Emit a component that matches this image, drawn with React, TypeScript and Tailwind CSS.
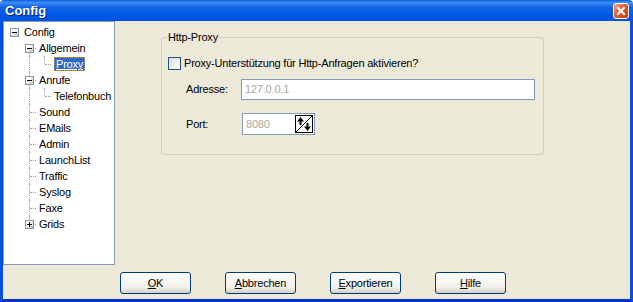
import type { ReactNode } from "react";

type Row = {
  label: string;
  level: number;
  expander?: "+" | "-";
  // columns that carry a vertical line: "pass" = full, "top" = top half only (L shape), "bottom" = from middle down
  cols: ("none" | "pass" | "top" | "bottom" | "tee")[];
  selected?: boolean;
};

const rows: Row[] = [
  { label: "Config", level: 0, expander: "-", cols: [] },
  { label: "Allgemein", level: 1, expander: "-", cols: ["none", "bottom"] },
  { label: "Proxy", level: 2, cols: ["none", "pass", "top"], selected: true },
  { label: "Anrufe", level: 1, expander: "-", cols: ["none", "tee"] },
  { label: "Telefonbuch", level: 2, cols: ["none", "pass", "top"] },
  { label: "Sound", level: 1, cols: ["none", "tee"] },
  { label: "EMails", level: 1, cols: ["none", "tee"] },
  { label: "Admin", level: 1, cols: ["none", "tee"] },
  { label: "LaunchList", level: 1, cols: ["none", "tee"] },
  { label: "Traffic", level: 1, cols: ["none", "tee"] },
  { label: "Syslog", level: 1, cols: ["none", "tee"] },
  { label: "Faxe", level: 1, cols: ["none", "tee"] },
  { label: "Grids", level: 1, expander: "+", cols: ["none", "top"] },
];

function Expander({ sign }: { sign: "+" | "-" }) {
  return (
    <div className="relative z-10 flex h-[9px] w-[9px] items-center justify-center border border-[#7A99B9] bg-[linear-gradient(135deg,#ffffff_30%,#C4C3B8)]">
      <div className="h-px w-[5px] bg-black" />
      {sign === "+" && <div className="absolute h-[5px] w-px bg-black" />}
    </div>
  );
}

function TreeRow({ row }: { row: Row }) {
  const cols = Array.from({ length: row.level + 1 }, (_, i) => row.cols[i] ?? "none");
  return (
    <div className="flex h-4 items-stretch">
      {cols.map((c, i) => {
        const own = i === row.level;
        return (
          <div key={i} className="relative flex w-[15px] shrink-0 items-center">
            {(c === "pass" || c === "tee") && (
              <div className="absolute left-[8px] top-0 h-4 border-l border-dotted border-[#A0A0A0]" />
            )}
            {c === "top" && (
              <div className="absolute left-[8px] top-0 h-2 border-l border-dotted border-[#A0A0A0]" />
            )}
            {c === "bottom" && (
              <div className="absolute left-[8px] top-2 h-2 border-l border-dotted border-[#A0A0A0]" />
            )}
            {own && row.level > 0 && (
              <div className="absolute left-[9px] top-[8px] w-[6px] border-t border-dotted border-[#A0A0A0]" />
            )}
            {own && row.expander && (
              <div className="absolute left-[4px] top-[4px]">
                <Expander sign={row.expander} />
              </div>
            )}
          </div>
        );
      })}
      <div className="flex items-center pl-[3px]">
        {row.selected ? (
          <span className="border border-dotted border-[#C89F4A] bg-[#316AC5] px-px leading-[12px] text-white underline">
            {row.label}
          </span>
        ) : (
          <span className="leading-[14px]">{row.label}</span>
        )}
      </div>
    </div>
  );
}

function XpButton({ children }: { children: ReactNode }) {
  return (
    <button className="flex h-[22px] w-[71px] items-center justify-center rounded-[3px] border border-[#003C74] bg-[linear-gradient(to_bottom,#FFFFFF,#F2F1EB_70%,#D6D0C5)] text-black">
      {children}
    </button>
  );
}

function SpinIcon() {
  return (
    <svg width="18" height="18" viewBox="0 0 18 18">
      <rect x="0.5" y="0.5" width="17" height="17" fill="#ffffff" stroke="#000000" />
      <line x1="1" y1="17" x2="17" y2="1" stroke="#000000" />
      <line x1="5.5" y1="4" x2="5.5" y2="10" stroke="#000000" strokeWidth="2" />
      <polygon points="2,6.5 5.5,2 9,6.5" fill="#000000" />
      <line x1="12.5" y1="8" x2="12.5" y2="14" stroke="#000000" strokeWidth="2" />
      <polygon points="9,11.5 12.5,16 16,11.5" fill="#000000" />
    </svg>
  );
}

export default function App() {
  return (
    <div
      className="flex h-[302px] w-[633px] flex-col text-[11px] tracking-[-0.2px] text-black"
      style={{ fontFamily: '"Liberation Sans", Arial, sans-serif' }}
    >
      {/* title bar */}
      <div className="flex h-[21px] shrink-0 items-center justify-between rounded-t-[4px] bg-[linear-gradient(to_bottom,#0A5CDA_0%,#3D8FF5_12%,#0F63E6_35%,#0058E6_70%,#0052DC_100%)] pl-[5px] pr-[4px]">
        <span className="pt-px text-[13px] font-bold tracking-normal text-white [text-shadow:1px_1px_0_#0A1E7A]">
          Config
        </span>
        <div className="flex h-[16px] w-[16px] items-center justify-center rounded-[3px] border border-white bg-[linear-gradient(135deg,#F2A58C,#E35A34_45%,#C8380F)]">
          <svg width="10" height="10" viewBox="0 0 10 10">
            <path d="M2 2 L8 8 M8 2 L2 8" stroke="#ffffff" strokeWidth="2" strokeLinecap="square" />
          </svg>
        </div>
      </div>

      {/* body with frame */}
      <div className="flex flex-1 flex-col border-x-[3px] border-b-[3px] border-x-[#0A4EE0] border-b-[#0A34C8] bg-[#ECE9D8]">
        <div className="flex h-[244px]">
          {/* tree */}
          <div className="h-full w-[112px] shrink-0 border border-[#7F9DB9] bg-white pl-[2px] pt-[2px]">
            {rows.map((r) => (
              <TreeRow key={r.label} row={r} />
            ))}
          </div>

          {/* page */}
          <div className="pl-[46px] pt-[10px]">
            <fieldset className="h-[124px] w-[383px] rounded-[3px] border border-[#D0D0BF] p-0">
              <legend className="ml-[5px] px-px leading-[13px]">Http-Proxy</legend>
              <div className="mt-[13px] flex h-[13px] items-center pl-[6px]">
                <div className="h-[13px] w-[13px] border border-[#1C5180] bg-[linear-gradient(135deg,#DCDCD7,#ffffff)]" />
                <span className="pl-[3px]">Proxy-Unterstützung für Http-Anfragen aktivieren?</span>
              </div>
              <div className="mt-[9px] flex h-[21px] items-center pl-[24px]">
                <span className="w-[55px]">Adresse:</span>
                <div className="flex h-[21px] w-[294px] items-center border border-[#7F9DB9] bg-white px-[3px] text-[#ACA899]">
                  127.0.0.1
                </div>
              </div>
              <div className="mt-[13px] flex h-[22px] items-center pl-[24px]">
                <span className="w-[56px]">Port:</span>
                <div className="flex h-[22px] w-[73px] items-center justify-between border border-[#7F9DB9] bg-white pl-[3px] pr-px text-[#ACA899]">
                  <span>8080</span>
                  <SpinIcon />
                </div>
              </div>
            </fieldset>
          </div>
        </div>

        {/* buttons */}
        <div className="flex gap-[34px] pl-[117px] pt-[7px]">
          <XpButton>
            <span><span className="underline">O</span>K</span>
          </XpButton>
          <XpButton>
            <span><span className="underline">A</span>bbrechen</span>
          </XpButton>
          <XpButton>
            <span><span className="underline">E</span>xportieren</span>
          </XpButton>
          <XpButton>
            <span><span className="underline">H</span>ilfe</span>
          </XpButton>
        </div>
      </div>
    </div>
  );
}
